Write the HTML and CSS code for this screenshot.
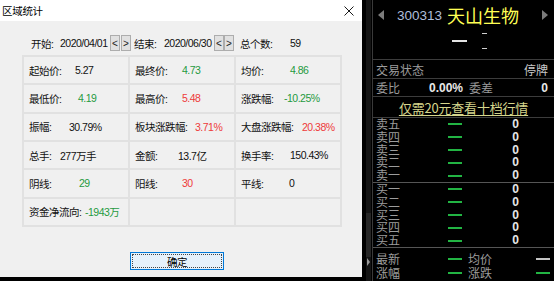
FILE: index.html
```html
<!DOCTYPE html>
<html lang="zh">
<head>
<meta charset="utf-8">
<title>区域统计</title>
<link rel="stylesheet" href="styles.css">
</head>
<body>
<div class="screen">
  <section class="dialog">
    <header class="titlebar">
      <span class="title">区域统计</span>
      <svg class="close" width="10" height="10" viewBox="0 0 10 10"><path d="M0.5 0.5 L9.5 9.5 M9.5 0.5 L0.5 9.5" stroke="#1a1a1a" stroke-width="1" fill="none"/></svg>
    </header>
    <div class="dlg-body">
      <div class="range">
        <span class="rl rl-start">开始:</span>
        <span class="date">2020/04/01</span>
        <span class="spin"><span class="sb">&lt;</span><span class="sb">&gt;</span></span>
        <span class="rl rl-end">结束:</span>
        <span class="date">2020/06/30</span>
        <span class="spin spin-tight"><span class="sb">&lt;</span><span class="sb">&gt;</span></span>
        <span class="rl rl-total">总个数:</span>
        <span class="num">59</span>
      </div>
      <div class="stats">
        <div class="cell"><span class="lb w46">起始价:</span><span class="val">5.27</span></div>
        <div class="cell"><span class="lb w47">最终价:</span><span class="val dn">4.73</span></div>
        <div class="cell"><span class="lb w49">均价:</span><span class="val dn">4.86</span></div>

        <div class="cell"><span class="lb w49">最低价:</span><span class="val dn">4.19</span></div>
        <div class="cell"><span class="lb w47">最高价:</span><span class="val up">5.48</span></div>
        <div class="cell"><span class="lb w43">涨跌幅:</span><span class="val dn">-10.25%</span></div>

        <div class="cell"><span class="lb w40">振幅:</span><span class="val">30.79%</span></div>
        <div class="cell"><span class="lb w60">板块涨跌幅:</span><span class="val up">3.71%</span></div>
        <div class="cell"><span class="lb w61">大盘涨跌幅:</span><span class="val up">20.38%</span></div>

        <div class="cell"><span class="lb w31">总手:</span><span class="val">277万手</span></div>
        <div class="cell"><span class="lb w43">金额:</span><span class="val">13.7亿</span></div>
        <div class="cell"><span class="lb w49">换手率:</span><span class="val">150.43%</span></div>

        <div class="cell"><span class="lb w50">阴线:</span><span class="val dn">29</span></div>
        <div class="cell"><span class="lb w47">阳线:</span><span class="val up">30</span></div>
        <div class="cell"><span class="lb w48">平线:</span><span class="val">0</span></div>

        <div class="cell"><span class="lb w56">资金净流向:</span><span class="val dn">-1943万</span></div>
        <div class="cell"></div>
        <div class="cell"></div>
      </div>
      <div class="ok"><div class="ok-in">确定</div></div>
    </div>
  </section>

  <div class="strip">
    <div class="track">
      <div class="thumb"></div>
      <div class="track-arrow"></div>
    </div>
  </div>

  <aside class="panel">
    <div class="quote-head">
      <div class="name-row">
        <span class="tri-l"></span>
        <span class="code">300313</span>
        <span class="name">天山生物</span>
        <span class="tri-r"></span>
      </div>
      <div class="price-row">
        <span class="pdash"></span>
        <span class="chg"><i></i><i></i></span>
      </div>
    </div>
    <div class="kv kv-status">
      <span>交易状态</span>
      <span class="kv-right light">停牌</span>
    </div>
    <div class="kv kv-ratio">
      <span class="ratio-lb">委比</span>
      <span class="bold-num">0.00%</span>
      <span class="diff-lb">委差</span>
      <span class="kv-right bold-num">0</span>
    </div>
    <div class="promo"><span class="promo-link">仅需20元查看十档行情</span></div>
    <div class="book book-sell">
      <div class="lvl"><span>卖五</span><span class="gdash"></span><span class="q">0</span></div>
      <div class="lvl"><span>卖四</span><span class="gdash"></span><span class="q">0</span></div>
      <div class="lvl"><span>卖三</span><span class="gdash"></span><span class="q">0</span></div>
      <div class="lvl"><span>卖二</span><span class="gdash"></span><span class="q">0</span></div>
      <div class="lvl"><span>卖一</span><span class="gdash"></span><span class="q">0</span></div>
    </div>
    <div class="book book-buy">
      <div class="lvl"><span>买一</span><span class="gdash"></span><span class="q">0</span></div>
      <div class="lvl"><span>买二</span><span class="gdash"></span><span class="q">0</span></div>
      <div class="lvl"><span>买三</span><span class="gdash"></span><span class="q">0</span></div>
      <div class="lvl"><span>买四</span><span class="gdash"></span><span class="q">0</span></div>
      <div class="lvl"><span>买五</span><span class="gdash"></span><span class="q">0</span></div>
    </div>
    <div class="foot">
      <div class="frow"><span>最新</span><span class="gdash"></span><span></span><span>均价</span><span class="wdash"></span></div>
      <div class="frow"><span>涨幅</span><span class="gdash"></span><span></span><span>涨跌</span><span class="gdash"></span></div>
    </div>
  </aside>
</div>
</body>
</html>
```

FILE: styles.css
```css
* { box-sizing: border-box; }
html, body { margin: 0; padding: 0; }
body {
  width: 554px;
  height: 281px;
  overflow: hidden;
  background: #000;
  font-family: "Liberation Sans", "Noto Sans CJK SC", sans-serif;
}
.screen { display: flex; width: 554px; height: 281px; }

/* ---------- dialog ---------- */
.dialog {
  width: 362px;
  height: 277px;
  display: flex;
  flex-direction: column;
  background: #f0f0f0;
  flex-shrink: 0;
}
.titlebar {
  height: 21px;
  background: #fff;
  display: flex;
  align-items: center;
  padding: 0 8px 0 2px;
}
.title { font-size: 10.5px; color: #000; letter-spacing: -0.3px; }
.close { margin-left: auto; }

.dlg-body {
  flex: 1;
  padding-top: 14px;
  font-size: 10.5px;
  color: #111;
  letter-spacing: -0.5px;
}
.range {
  display: flex;
  align-items: center;
  height: 16px;
  padding-left: 31px;
  white-space: nowrap;
}
.rl { display: inline-block; }
.rl-start { width: 29px; }
.rl-end { width: 30px; margin-left: 3px; }
.rl-total { width: 50px; margin-left: 6px; }
.date { width: 50px; }
.spin { display: flex; gap: 1px; }
.spin-tight { gap: 0; }
.sb {
  width: 10px;
  height: 16px;
  border: 1px solid #adadad;
  background: #e1e1e1;
  display: flex;
  align-items: center;
  justify-content: center;
  font-size: 10px;
  letter-spacing: 0;
  color: #222;
}

.stats {
  margin: 4px 0 0 22px;
  width: 320px;
  height: 172px;
  display: grid;
  grid-template-columns: repeat(3, 1fr);
  grid-template-rows: repeat(6, 1fr);
  gap: 2px;
  padding: 2px;
  background: #e1e1e1;
}
.cell {
  background: #f0f0f0;
  display: flex;
  align-items: center;
  padding-left: 5px;
  white-space: nowrap;
}
.lb { display: inline-block; flex-shrink: 0; }
.w31 { width: 31px; }
.w40 { width: 40px; }
.w43 { width: 43px; }
.w46 { width: 46px; }
.w47 { width: 47px; }
.w48 { width: 48px; }
.w49 { width: 49px; }
.w50 { width: 50px; }
.w56 { width: 56px; }
.w60 { width: 60px; }
.w61 { width: 61px; }
.val { color: #111; }
.val.dn { color: #1f9a40; }
.val.up { color: #ee3a3a; }

.ok {
  margin: 25px 0 0 130px;
  width: 94px;
  height: 18px;
  border: 1px solid #0078d7;
  background: #e5f1fb;
  padding: 1px;
}
.ok-in {
  height: 100%;
  border: 1px dotted #444;
  display: flex;
  align-items: center;
  justify-content: center;
  font-size: 10.5px;
  color: #000;
}

/* ---------- strip between ---------- */
.strip {
  width: 10px;
  flex-shrink: 0;
  padding-left: 4px;
  background: #000;
  display: flex;
}
.track {
  width: 5px;
  background: #141414;
  display: flex;
  flex-direction: column;
  align-items: center;
}
.thumb { margin-top: 213px; width: 5px; height: 44px; background: #262626; }
.track-arrow {
  margin-top: 1px;
  width: 0;
  height: 0;
  border-top: 4px solid transparent;
  border-bottom: 4px solid transparent;
  border-left: 3px solid #9a9a9a;
}

/* ---------- quote panel ---------- */
.panel {
  flex: 1;
  border-left: 1px solid #3a3a3a;
  display: flex;
  flex-direction: column;
  font-family: "Noto Sans CJK SC", sans-serif;
  color: #9c9c9c;
}
.quote-head { height: 60px; border-bottom: 1px solid #3c3c3c; flex-shrink: 0; }
.name-row {
  height: 30px;
  display: flex;
  align-items: center;
  padding: 0 6px 0 5px;
}
.tri-l {
  width: 0; height: 0;
  border-top: 5px solid transparent;
  border-bottom: 5px solid transparent;
  border-right: 6px solid #7c7c7c;
}
.tri-r {
  margin-left: auto;
  width: 0; height: 0;
  border-top: 5px solid transparent;
  border-bottom: 5px solid transparent;
  border-left: 6px solid #7c7c7c;
}
.code {
  margin-left: 13px;
  font-family: "Liberation Sans", sans-serif;
  font-size: 13.5px;
  color: #aebedb;
}
.name { margin-left: 5px; font-size: 18px; line-height: 20px; color: #ffff55; }
.price-row {
  height: 22px;
  display: flex;
  align-items: center;
  padding-left: 79px;
}
.pdash { width: 15px; height: 2px; background: #e4e4e4; }
.chg { margin-left: 15px; display: flex; flex-direction: column; gap: 14px; }
.chg i { display: block; width: 5px; height: 1px; background: #cfcfcf; }

.kv {
  display: flex;
  align-items: center;
  padding: 0 6px 0 3px;
  font-size: 12px;
  border-bottom: 1px solid #3c3c3c;
  flex-shrink: 0;
}
.kv-status { height: 19px; }
.kv-ratio { height: 18px; }
.kv-right { margin-left: auto; }
.light { color: #c8c8c8; }
.ratio-lb { width: 53px; }
.diff-lb { margin-left: 6px; }
.bold-num {
  font-family: "Liberation Sans", sans-serif;
  font-weight: bold;
  font-size: 12px;
  color: #e8e8e8;
}

.promo {
  height: 21px;
  display: flex;
  align-items: center;
  justify-content: center;
  border-bottom: 1px solid #3c3c3c;
  flex-shrink: 0;
}
.promo-link {
  font-size: 13px;
  color: #d6d68c;
  text-decoration: underline;
  text-underline-offset: 2px;
  letter-spacing: -0.2px;
}

.book {
  padding-left: 3px;
  border-bottom: 1px solid #555;
  flex-shrink: 0;
  height: 65px;
}
.lvl {
  display: grid;
  grid-template-columns: 72px 14px 57px;
  align-items: center;
  height: 12.8px;
  font-size: 12px;
  line-height: 12.8px;
}
.gdash { display: block; width: 14px; height: 2px; background: #22b443; }
.wdash { display: block; width: 14px; height: 2px; background: #c4c4c4; }
.q {
  text-align: right;
  font-family: "Liberation Sans", sans-serif;
  font-weight: bold;
  font-size: 12px;
  color: #e6e6e6;
}
.foot { padding: 4px 0 0 3px; }
.frow {
  display: grid;
  grid-template-columns: 72px 14px 6px 68px 14px;
  align-items: center;
  height: 14px;
  font-size: 12px;
  line-height: 14px;
}
```
